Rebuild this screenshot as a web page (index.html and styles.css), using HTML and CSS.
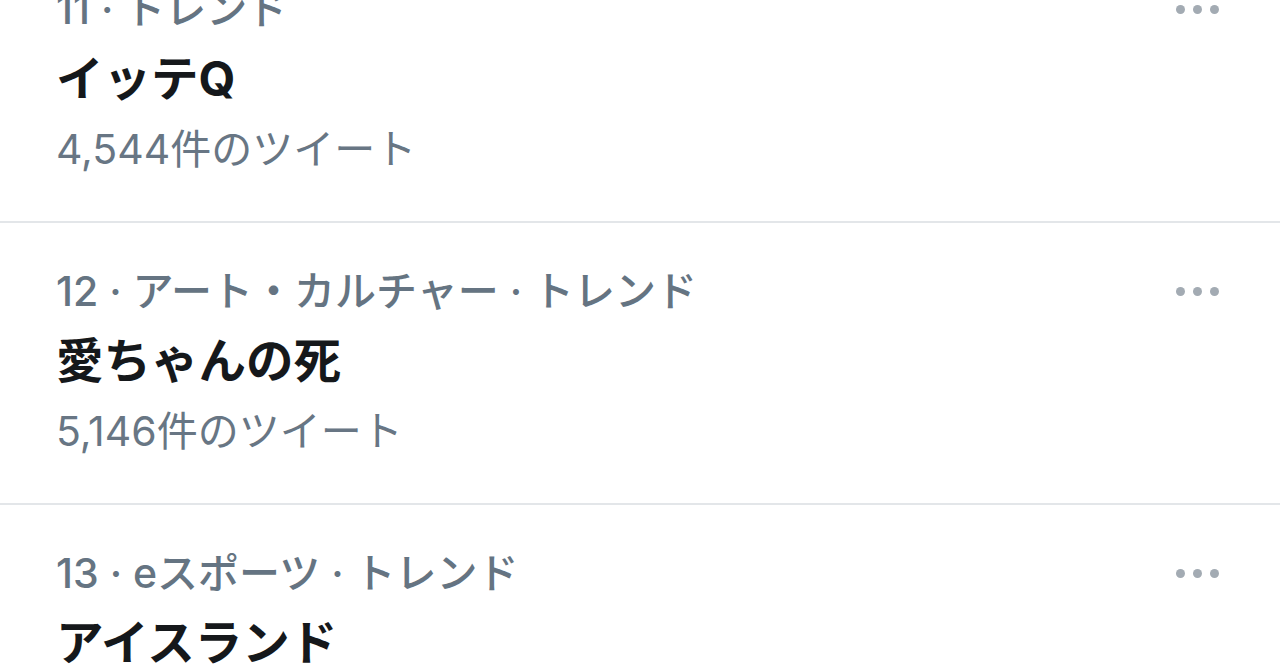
FILE: index.html
```html
<!DOCTYPE html>
<html lang="ja">
<head>
  <meta charset="UTF-8">
  <meta name="viewport" content="width=device-width, initial-scale=1.0">
  <title>トレンド</title>
  <link rel="stylesheet" href="styles.css">
</head>
<body>
  <div class="trends">
    <div class="trend">
      <div class="trend-text">
        <div class="meta">11 · トレンド</div>
        <div class="title">イッテQ</div>
        <div class="count">4,544件のツイート</div>
      </div>
      <div class="more"><span></span><span></span><span></span></div>
    </div>

    <div class="trend">
      <div class="trend-text">
        <div class="meta">12 · アート・カルチャー · トレンド</div>
        <div class="title">愛ちゃんの死</div>
        <div class="count">5,146件のツイート</div>
      </div>
      <div class="more"><span></span><span></span><span></span></div>
    </div>

    <div class="trend">
      <div class="trend-text">
        <div class="meta">13 · eスポーツ · トレンド</div>
        <div class="title">アイスランド</div>
        <div class="count">3,211件のツイート</div>
      </div>
      <div class="more"><span></span><span></span><span></span></div>
    </div>
  </div>
</body>
</html>
```

FILE: styles.css
```css
/* Global Styles */
body {
  margin: 0;
  background-color: white;
  font-family: Inter, "Noto Sans CJK JP", sans-serif;
  overflow: hidden;
}

.trends {
  margin-top: -59px;
}

.trend {
  display: flex;
  justify-content: space-between;
  align-items: flex-start;
  padding: 33px 0 37px 56px;
  border-bottom: 2px solid #e3e6e9;
}

.meta {
  font-size: 41px;
  line-height: 70px;
  font-weight: 500;
  color: #657482;
}

.title {
  font-size: 47.5px;
  line-height: 70px;
  font-weight: bold;
  color: #15181b;
}

.count {
  font-size: 41px;
  line-height: 70px;
  color: #687684;
}

.more {
  display: flex;
  gap: 8px;
  margin-top: 31px;
  margin-right: 61px;
}

.more span {
  width: 9px;
  height: 9px;
  border-radius: 50%;
  background-color: #a3abb3;
}
```
